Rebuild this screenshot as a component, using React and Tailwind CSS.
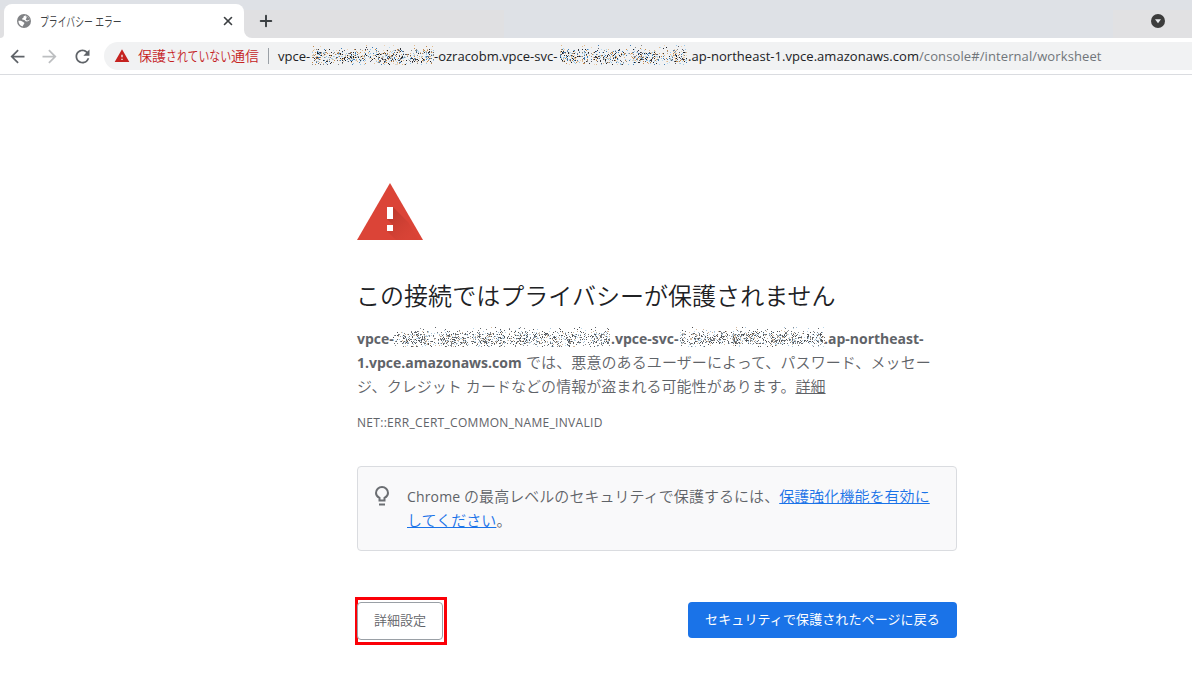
import { Plus, X } from 'lucide-react';
import { MdArrowBack, MdArrowForward, MdRefresh, MdWarning } from 'react-icons/md';

const FONT = "font-['Open_Sans','Noto_Sans_CJK_JP',sans-serif]";

// Speckled strip that hides part of a host name
const Redacted = ({ width, seed, colors, className = '' }) => {
  const height = 20;
  let state = seed;
  const rand = () => {
    state = (state * 1103515245 + 12345) % 2147483648;
    return state / 2147483648;
  };

  const dots = [];
  for (let y = 0; y < height; y++) {
    for (let x = 0; x < width; x++) {
      // sparse at the top edge, dense where the letters used to be
      let density = y < 4 ? 0.04 : y < 7 ? 0.2 : y < 17 ? 0.4 : 0.16;
      if (Math.sin(x / 6 + seed) > 0.7) density *= 0.6;
      if (rand() < density) {
        dots.push({ x, y, fill: colors[Math.floor(rand() * colors.length)] });
      }
    }
  }

  return (
    <svg width={width} height={height} shapeRendering="crispEdges" className={`block shrink-0 ${className}`}>
      {dots.map((d) => <rect key={`${d.x}-${d.y}`} x={d.x} y={d.y} width="1" height="1" fill={d.fill} />)}
    </svg>
  );
};

const URL_COLORS = ['#202124', '#33343c', '#5b5b68', '#8a8a8a', '#3f7db5', '#9ac8e8', '#b7d8ee', '#c58a4a', '#dfb98a', '#ead2b4'];
const BODY_COLORS = ['#5f6368', '#5f6368', '#4b4d50', '#77797c', '#8a8d91', '#a9c4da', '#bcd8ea', '#d2b99f'];

const Globe = () => (
  <svg width="14" height="14" viewBox="0 0 14 14" className="shrink-0">
    <circle cx="7" cy="7" r="7" fill="#808285" />
    <path d="M8.300 1.500C6.600 2 6.200 3 6.500 3.800 5.400 4 4.900 4.700 5.200 5.500 6.800 5.600 8.200 6 8.500 7.300 9.800 7.700 11.300 7.200 12.500 6.200 12.400 4 10.800 2 8.300 1.500z" fill="#fff" />
    <path d="M1.400 6.800C3.300 6.500 5.600 6.900 6.400 8.300 7.500 8.600 7.700 9.600 6.800 10.200 6.500 11 6 11.400 5.600 12.400 3.200 11.800 1.400 9.700 1.400 6.800z" fill="#fff" />
    <path d="M8 2.300C9.600 2.500 10.200 3.700 9.300 4.500 8.600 5.100 8.600 5.900 9.500 6.300 10.600 6.600 11.500 6.200 12.400 5.400 12 3.300 10.300 1.700 8 2.300z" fill="#808285" />
  </svg>
);

const TabStrip = () => (
  <div className="flex h-[38px] items-end bg-[#dee1e6]">
    <div className="h-7 w-1 bg-white"><div className="h-7 rounded-br bg-[#e0e0e2]"></div></div>
    <div className="flex h-[34px] w-[240px] items-center rounded-t-lg bg-white pl-[13px] pr-[9px]">
      <Globe />
      <div className="mb-[2px] ml-[9px] w-[82px] whitespace-nowrap">
        <span className="inline-block origin-left scale-x-[0.68] text-[13px] font-[350] text-[#3c4043]">プライバシー エラー</span>
      </div>
      <X size={14} strokeWidth={2.8} className="ml-auto text-[#3c4043]" />
    </div>
    <div className="h-7 w-[260px] bg-white">
      <div className="h-7 rounded-bl-lg bg-[#e0e0e2] pt-[2px] pl-[13px]">
        <Plus size={18} strokeWidth={2.6} className="text-[#3c4043]" />
      </div>
    </div>
    <div className="ml-auto flex h-[28px] w-[79px] items-center bg-[#e1e1e3] pl-[38px]">
      <svg width="14" height="14" viewBox="0 0 14 14" className="mb-[6px]">
        <circle cx="7" cy="7" r="7" fill="#3c3c3c" />
        <path d="M4 5.2h6L7 9.2z" fill="#e8eaed" />
      </svg>
    </div>
  </div>
);

const Toolbar = () => (
  <div className="flex h-[37px] items-center border-b border-[#dadce0] bg-white pl-[7px]">
    <MdArrowBack size={21} className="text-[#5f6368]" />
    <MdArrowForward size={21} className="ml-[11px] text-[#bdbfc1]" />
    <MdRefresh size={21} className="ml-3 text-[#5f6368]" />
    <div className="ml-[11px] flex h-7 flex-1 items-center rounded-l-full bg-[#f1f2f3] pl-[10px] text-[13px] whitespace-nowrap">
      <MdWarning size={16} className="shrink-0 text-[#c5221f]" />
      <div className="ml-2 flex w-[121px] shrink-0 text-sm leading-5 font-[350] text-[#c5221f]">
        <span>保護</span>
        <span className="w-[65px] shrink-0"><span className="inline-block origin-left scale-x-[0.78]">されていない</span></span>
        <span>通信</span>
      </div>
      <div className="ml-[9px] h-4 w-px shrink-0 bg-[#9aa0a6]"></div>
      <div className="ml-[9px] flex items-center pt-px text-[#202124]">
        <span className="w-[34px] shrink-0">vpce-</span>
        <Redacted width={122} seed={17} colors={URL_COLORS} className="mb-1" />
        <span className="w-[126px] shrink-0">-ozracobm.vpce-svc-</span>
        <Redacted width={127} seed={91} colors={URL_COLORS} className="mb-1" />
        <span className="ml-px w-[231px] shrink-0 tracking-[0.04px]">.ap-northeast-1.vpce.amazonaws.com</span>
        <span className="tracking-[0.1px] text-[#70757a]">/console#/internal/worksheet</span>
      </div>
    </div>
  </div>
);

const WarningTriangle = () => (
  <svg width="66" height="57" viewBox="0 0 66 57" className="block">
    <defs>
      <linearGradient id="shade" gradientUnits="userSpaceOnUse" x1="33" y1="30" x2="54" y2="51">
        <stop offset="0" stopColor="#a93226" />
        <stop offset="1" stopColor="#cf4034" stopOpacity="0.4" />
      </linearGradient>
    </defs>
    <path d="M33 0 66 57H0z" fill="#db4437" />
    <path d="M36 24 L51.500 39.500 61.600 57 H39 L30 48 H36 V42 L30 36 H36z" fill="url(#shade)" opacity="0.6" />
    <path d="M30 24h6v12h-6zM30 42h6v6h-6z" fill="#fff" />
  </svg>
);

const ErrorPage = () => (
  <main className="ml-[357px] w-[600px] pt-[108px] text-[15px] leading-6 text-[#5f6368]">
    <WarningTriangle />
    <h1 className="mt-[40px] -ml-px text-2xl leading-8 font-[350] tracking-[0.04px] whitespace-nowrap text-[#202124]">
      この接続ではプライバシーが保護されません
    </h1>

    <div className="mt-[14px] whitespace-nowrap">
      <div className="flex h-6 items-center pt-px text-sm font-bold">
        <span className="w-[36px] shrink-0">vpce-</span>
        <Redacted width={217} seed={45} colors={BODY_COLORS} className="mb-1" />
        <span className="ml-px w-[69px] shrink-0">.vpce-svc-</span>
        <Redacted width={145} seed={63} colors={BODY_COLORS} className="mb-1" />
        <span className="-ml-px">.ap-northeast-</span>
      </div>
      <div className="flex h-6 font-[350]">
        <span className="w-[169px] shrink-0 pt-px text-sm leading-6 font-bold">1.vpce.amazonaws.com</span>
        <span className="tracking-[0.1px]">では、悪意のあるユーザーによって、パスワード、メッセー</span>
      </div>
      <div className="h-6 font-[350] tracking-[0.05px]">
        ジ、クレジット カードなどの情報が盗まれる可能性があります。
        <a className="underline">詳細</a>
      </div>
    </div>

    <div className="mt-[13px] text-xs leading-6 tracking-[0.3px]">NET::ERR_CERT_COMMON_NAME_INVALID</div>

    <div className="mt-[31px] flex h-[85px] rounded border border-[#dadce0] bg-[#f9f9fa] pt-[17px] pl-4 whitespace-nowrap">
      <svg width="16" height="22" viewBox="0 0 16 22" className="mt-[2px] shrink-0" fill="none" stroke="#6b6e72" strokeWidth="2">
        <path d="M5.5 14.5v-2.6C3.300 10.800 2 9.300 2 7a6 6 0 0 1 12 0c0 2.300-1.300 3.800-3.500 4.900v2.600z" />
        <path d="M5 18.500h6" />
      </svg>
      <div className="ml-[17px] font-[350] tracking-[0.05px]">
        <div><span className="text-sm font-normal tracking-[0.15px]">Chrome </span>の最高レベルのセキュリティで保護するには、<a className="text-[#1a73e8] underline">保護強化機能を有効に</a></div>
        <div><a className="text-[#1a73e8] underline">してください</a>。</div>
      </div>
    </div>

    <div className="mt-[46px] -ml-[2px] flex items-start justify-between text-[13px]">
      <div className="h-12 w-[92px] border-3 border-[#fb0007]">
        <button className="mt-[2px] -ml-px block h-[38px] w-[86px] rounded border border-[#9aa0a6] bg-white pb-[2px] font-[350] text-[#5f6368]">詳細設定</button>
      </div>
      <button className="mt-[5px] h-9 w-[269px] rounded bg-[#1a73e8] pb-[2px] tracking-[0.1px] text-white">セキュリティで保護されたページに戻る</button>
    </div>
  </main>
);

const App = () => (
  <div className={`h-[677px] w-[1192px] overflow-hidden bg-white ${FONT}`}>
    <TabStrip />
    <Toolbar />
    <ErrorPage />
  </div>
);

export default App;
